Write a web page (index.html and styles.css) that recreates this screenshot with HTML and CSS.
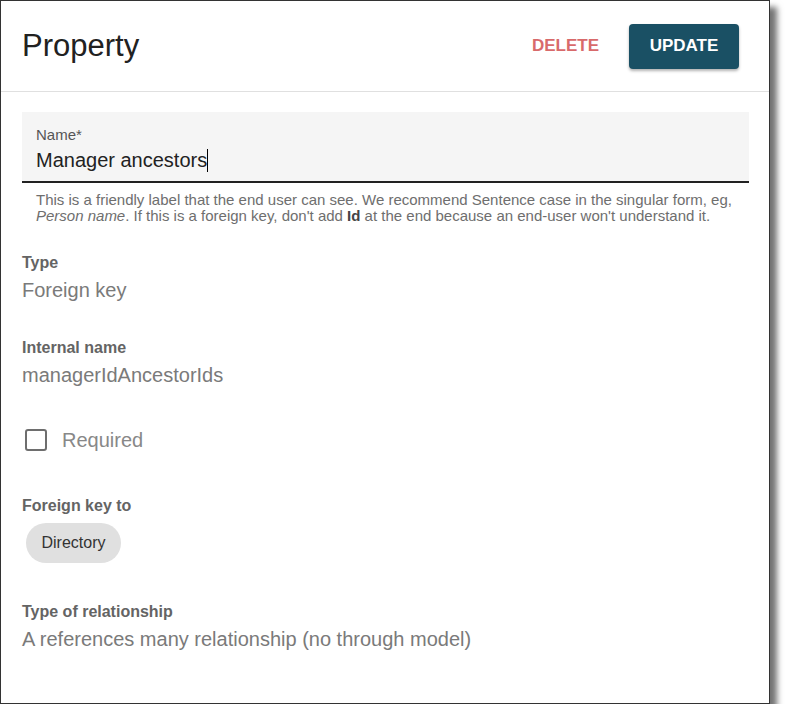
FILE: index.html
```html
<!DOCTYPE html>
<html lang="en">
<head>
  <meta charset="UTF-8" />
  <title>Property</title>
  <link rel="stylesheet" href="styles.css">
</head>
<body>
  <div class="window">
    <div class="header">
      <h1 class="title">Property</h1>
      <button class="btn-delete">Delete</button>
      <button class="btn-update">Update</button>
    </div>

    <div class="content">
      <div class="field">
        <div class="field-label">Name*</div>
        <div class="field-value">Manager ancestors<span class="caret"></span></div>
      </div>
      <div class="helper">
        This is a friendly label that the end user can see. We recommend Sentence case in the singular form, eg,
        <em>Person name</em>. If this is a foreign key, don't add <b>Id</b> at the end because an end-user won't understand it.
      </div>

      <div class="prop prop-type">
        <div class="prop-label">Type</div>
        <div class="prop-value">Foreign key</div>
      </div>

      <div class="prop prop-internal">
        <div class="prop-label">Internal name</div>
        <div class="prop-value">managerIdAncestorIds</div>
      </div>

      <label class="check-row">
        <span class="checkbox"></span>
        <span class="check-text">Required</span>
      </label>

      <div class="prop prop-fk">
        <div class="prop-label">Foreign key to</div>
        <div class="chip">Directory</div>
      </div>

      <div class="prop prop-rel">
        <div class="prop-label">Type of relationship</div>
        <div class="prop-value">A references many relationship (no through model)</div>
      </div>
    </div>
  </div>
</body>
</html>
```

FILE: styles.css
```css
body {
  font-family: "Liberation Sans", Arial, sans-serif;
  background: #fff;
  margin: 0;
}
.window {
  width: 768px;
  height: 702px;
  border: 1px solid #333;
  background: #fff;
  box-shadow: 7px 7px 6px rgba(0, 0, 0, 0.55);
}

/* Header */
.header {
  display: flex;
  align-items: center;
  height: 90px;
  padding: 0 30px 0 21px;
  border-bottom: 1px solid #e0e0e0;
}
.title {
  flex-grow: 1;
  margin: 0;
  font-size: 31px;
  line-height: 36px;
  font-weight: normal;
  color: #212121;
}
.btn-delete {
  font-family: inherit;
  font-size: 17px;
  font-weight: bold;
  text-transform: uppercase;
  color: #d86a6b;
  background: none;
  border: none;
  padding: 8px 10px;
  margin-right: 20px;
  cursor: pointer;
}
.btn-update {
  font-family: inherit;
  font-size: 17px;
  font-weight: bold;
  text-transform: uppercase;
  color: #fff;
  background: #1a5064;
  border: none;
  border-radius: 4px;
  width: 110px;
  height: 45px;
  box-shadow: 0 2px 3px rgba(0, 0, 0, 0.3);
  cursor: pointer;
}

/* Content */
.content {
  padding: 20px 20px 0 21px;
}
.field {
  background: #f5f5f5;
  border-bottom: 2px solid #222;
  padding: 14px 14px 9px;
  height: 46px;
}
.field-label {
  font-size: 15px;
  line-height: 18px;
  color: #555;
}
.field-value {
  margin-top: 4px;
  font-size: 20px;
  line-height: 24px;
  color: #222;
}
.caret {
  display: inline-block;
  width: 1px;
  height: 23px;
  background: #000;
  vertical-align: -5px;
}
.helper {
  margin-top: 9px;
  padding: 0 14px;
  font-size: 15px;
  line-height: 16px;
  color: #6e6e6e;
}
.helper b {
  color: #444;
}

.prop-label {
  font-size: 16px;
  line-height: 20px;
  font-weight: bold;
  color: #646464;
}
.prop-value {
  margin-top: 5px;
  font-size: 20px;
  line-height: 24px;
  color: #7a7a7a;
}
.prop-type {
  margin-top: 29px;
}
.prop-internal {
  margin-top: 36px;
}
.check-row {
  display: flex;
  align-items: center;
  height: 40px;
  margin-top: 33px;
}
.checkbox {
  width: 18px;
  height: 18px;
  border: 2px solid #6e6e6e;
  border-radius: 3px;
  margin-left: 3px;
  margin-right: 15px;
}
.check-text {
  font-size: 20px;
  color: #888;
}
.prop-fk {
  margin-top: 36px;
}
.chip {
  display: inline-flex;
  align-items: center;
  justify-content: center;
  height: 40px;
  width: 95px;
  margin: 7px 0 0 4px;
  border-radius: 20px;
  background: #e0e0e0;
  font-size: 16px;
  color: #333;
}
.prop-rel {
  margin-top: 39px;
}
```
